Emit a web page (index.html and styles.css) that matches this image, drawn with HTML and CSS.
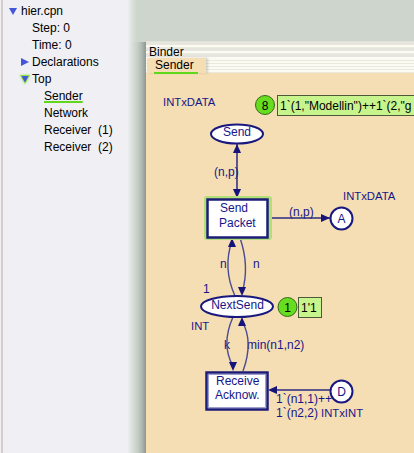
FILE: index.html
```html
<!DOCTYPE html>
<html>
<head>
<meta charset="utf-8">
<link rel="stylesheet" href="styles.css">
</head>
<body>
<div class="app">
  <aside class="tree">
    <div class="row l0">
      <svg class="tw" width="10" height="10" viewBox="0 0 10 10"><polygon points="1,2 9,2 5,9" fill="#4656d8"/></svg>
      <span>hier.cpn</span>
    </div>
    <div class="row l1 leaf"><span>Step: 0</span></div>
    <div class="row l1 leaf"><span>Time: 0</span></div>
    <div class="row l1">
      <svg class="tw" width="10" height="10" viewBox="0 0 10 10"><polygon points="1,1 9,5 1,9" fill="#4656d8"/></svg>
      <span>Declarations</span>
    </div>
    <div class="row l1">
      <svg class="tw tw-glow" width="10" height="10" viewBox="0 0 10 10"><polygon points="0,1 10,1 5,10" fill="#8ee04a"/><polygon points="1.5,2 8.5,2 5,8.5" fill="#4656d8"/></svg>
      <span>Top</span>
    </div>
    <div class="row l2"><span class="current">Sender</span></div>
    <div class="row l2"><span>Network</span></div>
    <div class="row l2"><span>Receiver&nbsp; (1)</span></div>
    <div class="row l2"><span>Receiver&nbsp; (2)</span></div>
  </aside>
  <div class="shade">
    <div class="shade-top"></div>
    <div class="shade-bottom"></div>
  </div>
  <main class="workspace">
    <section class="binder">
      <div class="binder-title">Binder</div>
      <div class="tabs">
        <div class="tab"><span class="tab-label">Sender</span></div>
      </div>
      <div class="canvas">
        <svg class="net" width="268" height="380" viewBox="146 73 268 380">
          <g class="labels">
            <text x="163" y="106" class="cs">INTxDATA</text>
            <text x="343" y="200" class="cs">INTxDATA</text>
            <text x="191" y="330" class="cs">INT</text>
            <text x="321" y="417" class="cs">INTxINT</text>
            <text x="214" y="176">(n,p)</text>
            <text x="289" y="216">(n,p)</text>
            <text x="220" y="268">n</text>
            <text x="253" y="268">n</text>
            <text x="203" y="293">1</text>
            <text x="224" y="349">k</text>
            <text x="247" y="349">min(n1,n2)</text>
            <text x="276" y="403">1`(n1,1)++</text>
            <text x="276" y="417">1`(n2,2)</text>
          </g>

          <g class="arcs">
            <line x1="237" y1="144" x2="237" y2="198"/>
            <line x1="268" y1="218" x2="330" y2="218"/>
            <path d="M235 296 C226 276 226 258 232 241"/>
            <path d="M240 238 C247 258 247 276 242 293"/>
            <path d="M233 317 C225 335 225 352 233 366"/>
            <path d="M243 371 C250 352 250 335 242 321"/>
            <line x1="330" y1="390" x2="272" y2="390"/>
          </g>
          <g class="heads">
            <polygon points="237,144 233,153 241,153"/>
            <polygon points="237,198 233,189 241,189"/>
            <polygon points="330,218 321,214 321,222"/>
            <polygon points="232,238 228,247 236,247"/>
            <polygon points="242,296 238,287 246,287"/>
            <polygon points="233,371 229,362 237,362"/>
            <polygon points="242,317 238,326 246,326"/>
            <polygon points="268,390 277,386 277,394"/>
          </g>

          <ellipse class="place" cx="237" cy="134" rx="26" ry="9.5"/>
          <text x="237" y="135.5" class="mid">Send</text>

          <ellipse class="place" cx="237" cy="306.5" rx="36" ry="10.5"/>
          <text x="237.5" y="308.5" class="mid">NextSend</text>

          <circle class="place" cx="341.5" cy="218.5" r="11"/>
          <text x="341.5" y="222.5" class="mid">A</text>
          <circle class="place" cx="341.5" cy="391.5" r="11"/>
          <text x="341.5" y="395.5" class="mid">D</text>

          <rect class="halo" x="204" y="196" width="68" height="44" rx="3"/>
          <rect class="trans" x="207.5" y="199.5" width="60" height="38"/>
          <text x="220" y="212">Send</text>
          <text x="219" y="227">Packet</text>

          <rect class="trans" x="206.5" y="372.5" width="61" height="37"/>
          <rect class="trans-inner" x="208.5" y="374.5" width="57" height="33"/>
          <text x="216" y="385">Receive</text>
          <text x="215" y="399">Acknow.</text>

          <circle class="token" cx="265" cy="105" r="9.5"/>
          <text x="265" y="109.5" class="mid black">8</text>
          <rect class="marking" x="277.5" y="95.5" width="140" height="20"/>
          <text x="280" y="110" class="black">1`(1,"Modellin")++1`(2,"g</text>

          <circle class="token" cx="287.5" cy="307" r="9.5"/>
          <text x="287.5" y="311.5" class="mid black">1</text>
          <rect class="marking" x="298.5" y="297.5" width="23" height="20"/>
          <text x="301" y="312" class="black">1'1</text>
        </svg>
      </div>
    </section>
  </main>
</div>
</body>
</html>
```

FILE: styles.css
```css
html, body {
  margin: 0;
  padding: 0;
}

body {
  width: 414px;
  height: 453px;
  overflow: hidden;
  background: #efeff4;
  font-family: "Liberation Sans", Arial, sans-serif;
  font-size: 12px;
  color: #000;
}

.app {
  display: flex;
  height: 453px;
}

/* ---------- left tree ---------- */
.tree {
  width: 125px;
  margin-left: 1px;
  border-left: 2px solid #d4d0c8;
  background: #efeff4;
  padding-top: 2px;
  box-sizing: content-box;
}

.row {
  display: flex;
  align-items: center;
  height: 17px;
  white-space: nowrap;
}

.row .tw {
  flex: none;
  margin-right: 2px;
}

.row.l0 { padding-left: 3px; }
.row.l0 .tw { margin-left: 2px; margin-right: 3px; }
.row.l1 { padding-left: 16px; }
.row.l1 .tw { margin-left: 1px; margin-right: 2px; }
.row.l1.leaf { padding-left: 29px; }
.row.l2 { padding-left: 41px; }

.current {
  text-decoration: underline 2px #5fd81c;
  text-underline-offset: 1px;
}

.tw-glow {
  filter: drop-shadow(0 0 1px #9be85a);
}

/* ---------- shade strip ---------- */
.shade {
  width: 18px;
  display: flex;
  flex-direction: column;
}

.shade-top {
  height: 42px;
  background: linear-gradient(to right, #eceef0 0, #d8dfd8 5px, #cdd5cc 9px, #cdd5cc 100%);
}

.shade-bottom {
  flex: 1;
  background: linear-gradient(to right, #eceef0 0, #d6ddd6 5px, #c4ccc5 10px, #adb6af 14px, #8e9891 18px);
}

/* ---------- workspace ---------- */
.workspace {
  flex: 1;
  display: flex;
  padding-top: 42px;
  background: #cdd5cc;
}

.binder {
  flex: 1;
  display: flex;
  flex-direction: column;
  background: #f5deb3;
  min-width: 0;
}

.binder-title {
  height: 13px;
  padding: 3px 0 0 3px;
  line-height: 14px;
  border-top: 1px solid #e0e2d8;
  margin-top: -1px;
  background: repeating-linear-gradient(to bottom, #e6e6de 0, #e6e6de 3px, #fbfbf4 3px, #fbfbf4 5px, #ebebe0 5px, #ebebe0 6px);
}

.tabs {
  height: 15px;
  display: flex;
  background: repeating-linear-gradient(to bottom, #fbfbf4 0, #fbfbf4 2px, #e9e9dd 2px, #e9e9dd 3px);
}

.tab {
  width: 59px;
  margin-left: 1px;
  background: #f5deb3;
  box-shadow: 2px 0 2px rgba(90, 90, 80, 0.25);
  padding-left: 7px;
  box-sizing: border-box;
}

.tab-label {
  display: inline-block;
  line-height: 13px;
  padding: 0 4px 0 1px;
  border-bottom: 2px solid #5fd81c;
}

.canvas {
  flex: 1;
  overflow: hidden;
}

.net {
  display: block;
  font-family: "Liberation Sans", Arial, sans-serif;
  font-size: 12px;
}

.net text {
  fill: #16168a;
}

.net text.cs {
  font-size: 11.3px;
}

.net text.mid {
  text-anchor: middle;
}

.net text.black {
  fill: #000;
}

.arcs line,
.arcs path {
  fill: none;
  stroke: #2a2a82;
  stroke-width: 1.5;
}

.arcs path {
  stroke: #4a4a95;
  stroke-width: 1.4;
}

.heads polygon {
  fill: #14147a;
}

.place {
  fill: #fff;
  stroke: #18187e;
  stroke-width: 2;
}

.halo {
  fill: #b2df78;
}

.trans {
  fill: #fff;
  stroke: #1c1c78;
  stroke-width: 2.5;
}

.trans-inner {
  fill: none;
  stroke: #8888c0;
  stroke-width: 0.8;
}

.token {
  fill: #66dd1e;
  stroke: #356a1a;
  stroke-width: 1;
}

.marking {
  fill: #c8f48e;
  stroke: #4c5a38;
  stroke-width: 1;
}
```
